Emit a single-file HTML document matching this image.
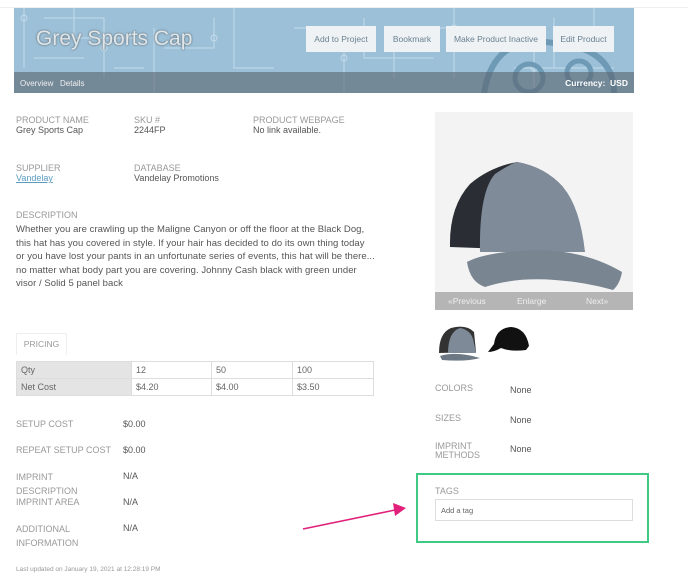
<!DOCTYPE html>
<html><head><style>
*{margin:0;padding:0;box-sizing:border-box}
body{width:688px;height:585px;background:#fff;font-family:"Liberation Sans",sans-serif;position:relative;overflow:hidden;color:#555}
.a{position:absolute;white-space:nowrap}
.l{color:#999;font-size:9px;line-height:10px}
.v{color:#555;font-size:9px;line-height:10px}
.btn{position:absolute;top:26px;height:26px;background:#eef2f4;color:#6a8190;font-size:8.5px;line-height:26px;text-align:center}
td{border:1px solid #ddd;font-size:9px;color:#666;padding:0 4px;height:17px}
</style></head><body>
<div class="a" style="left:0;top:0;width:688px;height:8px;border-bottom:1px solid #eee"></div>
<div class="a" style="left:14px;top:8px;width:620px;height:85px;background:#9cc0d8;overflow:hidden">
<svg width="620" height="85" style="position:absolute;left:0;top:0" fill="none" stroke="#c4dbea" stroke-width="1">
<path d="M10 0V60M30 10H90V70M60 0V30H120M140 20V85M150 40H200V10M220 0V60H260M280 20H330V85M350 10V50H420M440 0V70M470 30H520V85M540 10V60H600M580 0V40M20 50H70M100 60H130M380 70V30M400 20H460M500 60H560"/>
<circle cx="10" cy="10" r="3"/><circle cx="90" cy="40" r="3"/><circle cx="200" cy="30" r="3"/><circle cx="330" cy="50" r="3"/><circle cx="440" cy="20" r="3"/><circle cx="520" cy="60" r="3"/>
<path d="M470 85Q480 25 540 35Q600 40 600 85" stroke="#6f9ab6" stroke-width="6"/>
<circle cx="515" cy="70" r="14" stroke="#6f9ab6" stroke-width="5"/><circle cx="565" cy="65" r="12" stroke="#6f9ab6" stroke-width="5"/>
</svg>
<div style="position:absolute;left:0;top:64px;width:620px;height:21px;background:rgba(90,100,110,.6)"></div>
<div class="a" style="left:22px;top:19px;font-size:21px;color:#dfe6ea;text-shadow:0 0 2px #555">Grey Sports Cap</div>
<div class="a" style="left:6px;top:71px;font-size:8px;color:#eee">Overview &nbsp;&nbsp;Details</div>
<div class="a" style="right:6px;top:70px;font-size:8.5px;color:#fff;font-weight:bold">Currency: &nbsp;USD</div>
</div>
<div class="btn" style="left:306px;width:70px">Add to Project</div>
<div class="btn" style="left:384px;width:56px">Bookmark</div>
<div class="btn" style="left:446px;width:100px">Make Product Inactive</div>
<div class="btn" style="left:553px;width:61px">Edit Product</div>

<div class="a l" style="left:16px;top:115px">PRODUCT NAME</div><div class="a v" style="left:16px;top:125px">Grey Sports Cap</div>
<div class="a l" style="left:134px;top:115px">SKU #</div><div class="a v" style="left:134px;top:125px">2244FP</div>
<div class="a l" style="left:253px;top:115px">PRODUCT WEBPAGE</div><div class="a v" style="left:253px;top:125px">No link available.</div>
<div class="a l" style="left:16px;top:163px">SUPPLIER</div><div class="a v" style="left:16px;top:173px;color:#5b9cc0;text-decoration:underline">Vandelay</div>
<div class="a l" style="left:134px;top:163px">DATABASE</div><div class="a v" style="left:134px;top:173px">Vandelay Promotions</div>
<div class="a l" style="left:16px;top:210px">DESCRIPTION</div>
<div class="a v" style="left:16px;top:223px;line-height:13.6px;font-size:9.5px;letter-spacing:0.05px">Whether you are crawling up the Maligne Canyon or off the floor at the Black Dog,<br>this hat has you covered in style. If your hair has decided to do its own thing today<br>or you have lost your pants in an unfortunate series of events, this hat will be there...<br>no matter what body part you are covering. Johnny Cash black with green under<br>visor / Solid 5 panel back</div>

<div class="a" style="left:16px;top:333px;width:51px;height:22px;border:1px solid #eee;border-bottom:none;font-size:8.5px;color:#999;text-align:center;line-height:21px">PRICING</div>
<table class="a" style="left:16px;top:361px;width:358px;border-collapse:collapse">
<tr><td style="background:#e4e4e4;width:115px">Qty</td><td style="width:80px">12</td><td style="width:81px">50</td><td>100</td></tr>
<tr><td style="background:#e4e4e4">Net Cost</td><td>$4.20</td><td>$4.00</td><td>$3.50</td></tr></table>

<div class="a l" style="left:16px;top:419px">SETUP COST</div><div class="a v" style="left:123px;top:419px">$0.00</div>
<div class="a l" style="left:16px;top:445px">REPEAT SETUP COST</div><div class="a v" style="left:123px;top:445px">$0.00</div>
<div class="a l" style="left:16px;top:471px;line-height:13.5px">IMPRINT<br>DESCRIPTION</div><div class="a v" style="left:123px;top:471px">N/A</div>
<div class="a l" style="left:16px;top:497px">IMPRINT AREA</div><div class="a v" style="left:123px;top:497px">N/A</div>
<div class="a l" style="left:16px;top:523px;line-height:13.5px">ADDITIONAL<br>INFORMATION</div><div class="a v" style="left:123px;top:523px">N/A</div>
<div class="a" style="left:16px;top:566px;font-size:6.5px;color:#999">Last updated on January 19, 2021 at 12:28:19 PM</div>

<div class="a" style="left:435px;top:112px;width:198px;height:198px;background:#f3f3f3;overflow:hidden">
<svg width="198" height="198">
<path d="M15 135Q14 95 35 72Q55 55 82 50Q110 55 128 75L150 140Z" fill="#2a2d33"/>
<path d="M45 140Q44 80 60 62Q75 52 82 50Q110 55 128 75Q145 95 150 140Z" fill="#7f8b99"/>
<path d="M32 150Q50 140 100 138Q150 138 187 160Q185 172 178 178Q150 170 120 168Q80 165 50 175Q35 170 32 150Z" fill="#7a8592"/>
</svg>
<div style="position:absolute;left:0;top:180px;width:198px;height:18px;background:#b5b5b5;font-size:8.5px;color:#eee;line-height:18px">
<span class="a" style="left:13px">«Previous</span><span class="a" style="left:82px">Enlarge</span><span class="a" style="left:151px">Next»</span></div>
</div>
<svg class="a" style="left:436px;top:318px" width="100" height="46">
<path d="M3 35Q3 15 15 10Q30 6 38 14L40 34Z" fill="#333"/><path d="M12 35Q12 14 24 10Q36 12 38 25L40 35Z" fill="#7e8a98"/><path d="M4 38Q20 33 44 40Q30 44 6 42Z" fill="#6d7885"/>
<path d="M58 26Q60 10 75 9Q90 10 93 28L90 32Q75 34 65 30Q58 34 52 34Z" fill="#111"/>
</svg>
<div class="a l" style="left:435px;top:383px">COLORS</div><div class="a v" style="left:510px;top:385px">None</div>
<div class="a l" style="left:435px;top:413px">SIZES</div><div class="a v" style="left:510px;top:415px">None</div>
<div class="a l" style="left:435px;top:442px;line-height:9px">IMPRINT<br>METHODS</div><div class="a v" style="left:510px;top:444px">None</div>

<div class="a" style="left:416px;top:473px;width:233px;height:70px;border:2px solid #3ec985"></div>
<div class="a l" style="left:435px;top:486px">TAGS</div>
<div class="a" style="left:435px;top:499px;width:198px;height:22px;border:1px solid #ddd;font-size:7.5px;color:#666;line-height:21px;padding-left:5px">Add a tag</div>
<svg class="a" style="left:0;top:0" width="688" height="585"><line x1="303" y1="529" x2="395" y2="510" stroke="#e0207a" stroke-width="1.6"/><path d="M406 508L393 503L395 516Z" fill="#e0207a"/></svg>
</body></html>
